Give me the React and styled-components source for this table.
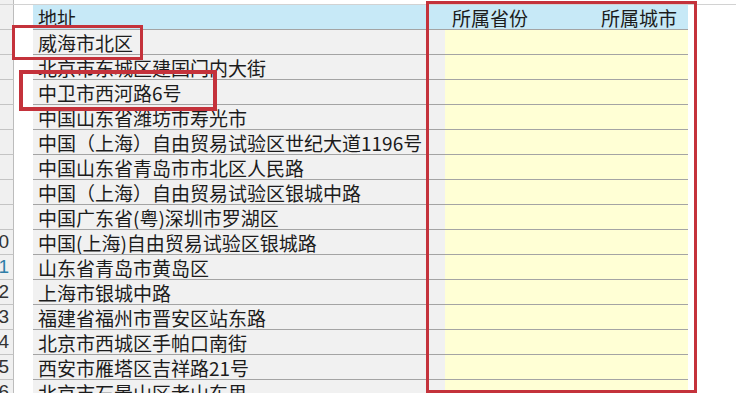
import React from 'react';
import styled, { createGlobalStyle } from 'styled-components';

const addresses = [
    '威海市北区',
    '北京市东城区建国门内大街',
    '中卫市西河路6号',
    '中国山东省潍坊市寿光市',
    '中国（上海）自由贸易试验区世纪大道1196号',
    '中国山东省青岛市市北区人民路',
    '中国（上海）自由贸易试验区银城中路',
    '中国广东省(粤)深圳市罗湖区',
    '中国(上海)自由贸易试验区银城路',
    '山东省青岛市黄岛区',
    '上海市银城中路',
    '福建省福州市晋安区站东路',
    '北京市西城区手帕口南街',
    '西安市雁塔区吉祥路21号',
    '北京市石景山区老山东里',
];

const App = () => {
    return (
        <>
            <GlobalStyle />
            <Sheet>
                <TopStrip>
                    <TopHead />
                </TopStrip>
                <Row>
                    <RowHead />
                    <Gap />
                    <HeadCell $w={412} $pl={5}>
                        地址
                    </HeadCell>
                    <HeadCell $w={121} $pl={7}>
                        所属省份
                    </HeadCell>
                    <HeadCell $w={122} $pr={11} $right>
                        所属城市
                    </HeadCell>
                </Row>
                {addresses.map((addr, i) => {
                    // header is sheet row 1, so data starts at row 2
                    const n = i + 2;
                    return (
                        <Row key={addr}>
                            <RowHead $active={n === 11}>
                                {n >= 10 ? n : ''}
                            </RowHead>
                            <Gap />
                            <AddressCell>{addr}</AddressCell>
                            <InputCell $w={121} />
                            <InputCell $w={122} />
                        </Row>
                    );
                })}
                <Mark $x={12} $y={25} $w={131} $h={35} $b={3} />
                <Mark $x={19} $y={70} $w={198} $h={41} $b={4} />
                <Mark $x={426} $y={1} $w={271} $h={392} $b={3} />
            </Sheet>
        </>
    );
};
export default App;

const GlobalStyle = createGlobalStyle`
    html, body {
        margin: 0;
        padding: 0;
        background: #fff;
        overflow: hidden;
    }
`;

const Sheet = styled.div`
    position: relative;
    width: 736px;
    height: 393px;
    overflow: hidden;
    background: #fff;
    font-family: 'Noto Sans CJK SC', 'Noto Sans', sans-serif;
    color: #1c1c1c;
`;
const TopStrip = styled.div`
    display: flex;
    height: 4px;
    border-bottom: 1px solid #d2d2d2;
`;
const TopHead = styled.div`
    width: 13px;
    background: #f0f0f0;
    border-right: 1px solid #bcbcbc;
`;
const Row = styled.div`
    display: flex;
    height: 25px;
`;
const RowHead = styled.div`
    width: 14px;
    height: 25px;
    flex: none;
    box-sizing: border-box;
    display: flex;
    justify-content: flex-end;
    align-items: center;
    overflow: hidden;
    padding-right: 4px;
    background: #f0f0f0;
    border-right: 1px solid #bcbcbc;
    border-bottom: 1px solid #c4c4c4;
    font-family: 'Liberation Sans', Arial, sans-serif;
    font-size: 19px;
    white-space: nowrap;
    color: ${p => (p.$active ? '#2f7fa8' : '#333')};
`;
const Gap = styled.div`
    width: 19px;
    flex: none;
    background: #fff;
`;
const Cell = styled.div`
    flex: none;
    box-sizing: border-box;
    height: 25px;
    border-bottom: 1px solid #a4a4a4;
    font-size: 19px;
    line-height: 25px;
    white-space: nowrap;
    overflow: hidden;
`;
const HeadCell = styled(Cell)`
    width: ${p => p.$w}px;
    background: #c7e9f7;
    padding-left: ${p => p.$pl || 0}px;
    padding-right: ${p => p.$pr || 0}px;
    text-align: ${p => (p.$right ? 'right' : 'left')};
    line-height: 26px;
`;
const AddressCell = styled(Cell)`
    width: 412px;
    background: #f1f1f1;
    padding-left: 5px;
`;
const InputCell = styled(Cell)`
    width: ${p => p.$w}px;
    background: #ffffd5;
`;
const Mark = styled.div`
    position: absolute;
    left: ${p => p.$x}px;
    top: ${p => p.$y}px;
    width: ${p => p.$w}px;
    height: ${p => p.$h}px;
    border: ${p => p.$b}px solid #c4323b;
    box-sizing: border-box;
    pointer-events: none;
`;
